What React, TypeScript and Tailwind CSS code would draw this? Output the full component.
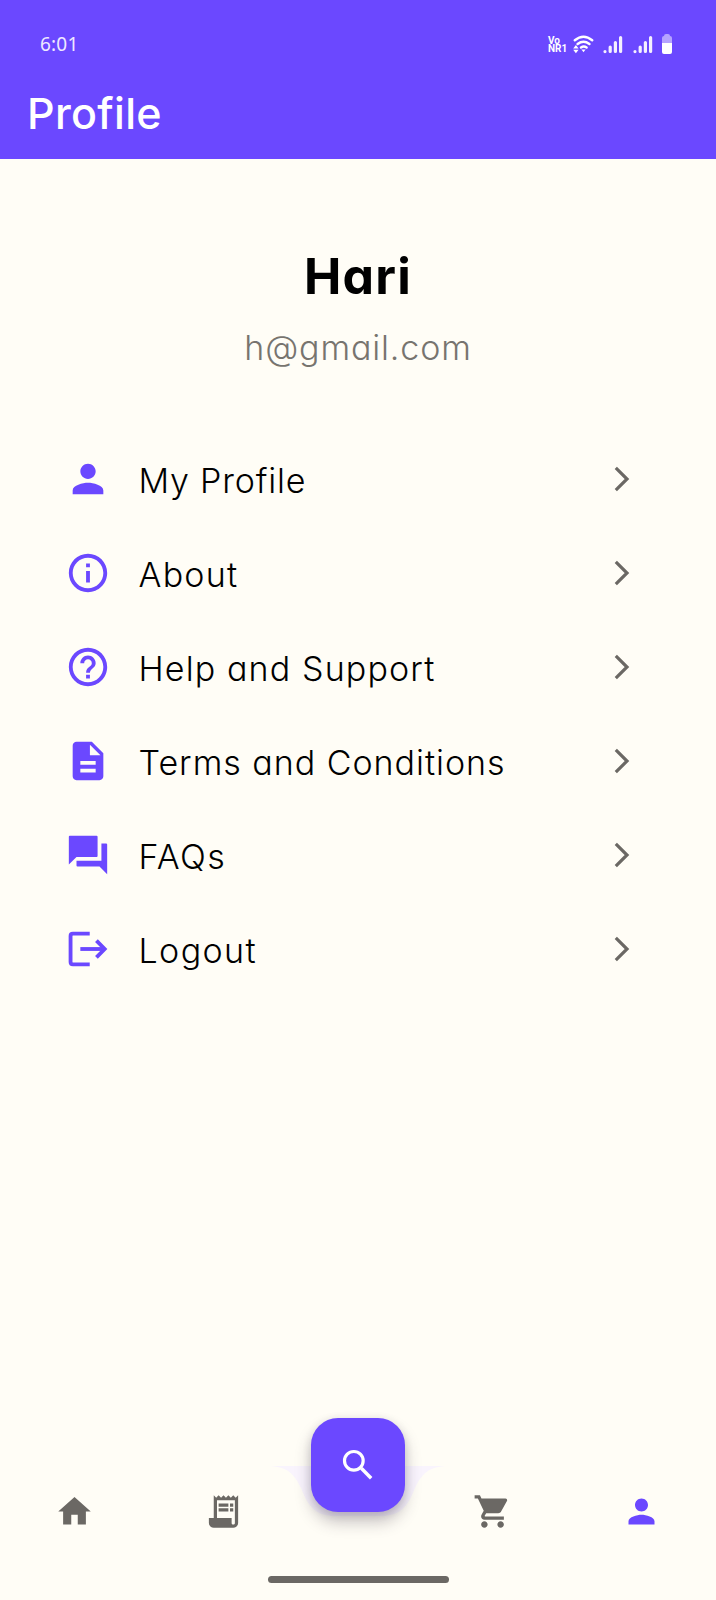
import type { ComponentType } from 'react'
import {
  MdPerson,
  MdInfoOutline,
  MdHelpOutline,
  MdDescription,
  MdHome,
  MdReceiptLong,
  MdShoppingCart,
} from 'react-icons/md'

type IconType = ComponentType<{ className?: string }>

interface MenuItem {
  label: string
  icon: IconType
  tracking: string
}

function LogoutIcon({ className }: { className?: string }) {
  return (
    <svg viewBox="0 0 24 24" fill="none" stroke="currentColor" strokeWidth="2" className={className}>
      <path d="M12 4H4.2Q3 4 3 5.2V18.8Q3 20 4.2 20H12" strokeLinecap="square" transform="translate(-0.1 0)" />
      <path d="M8 12H20.3" />
      <path d="M16.4 7.6L20.7 12L16.4 16.4" />
    </svg>
  )
}

function ForumIcon({ className }: { className?: string }) {
  return (
    <svg viewBox="0 0 24 24" fill="currentColor" className={className}>
      <path d="M21.5 6H19v9H6v2.5q0 .5.5.5H18l4 4V6.5q0-.5-.5-.5zM17 12.5v-10q0-.5-.5-.5h-14q-.5 0-.5.5V17l4-4h10.5q.5 0 .5-.5z" />
    </svg>
  )
}

function SearchIcon({ className }: { className?: string }) {
  return (
    <svg viewBox="0 0 24 24" fill="none" stroke="currentColor" strokeWidth="1.9" className={className}>
      <circle cx="9.5" cy="9.5" r="5.6" />
      <path d="M14 14L19.9 19.9" strokeWidth="2.1" />
    </svg>
  )
}

const menuItems: MenuItem[] = [
  { label: 'My Profile', icon: MdPerson, tracking: 'tracking-[0.8px]' },
  { label: 'About', icon: MdInfoOutline, tracking: 'tracking-[1.25px]' },
  { label: 'Help and Support', icon: MdHelpOutline, tracking: 'tracking-[1.13px]' },
  { label: 'Terms and Conditions', icon: MdDescription, tracking: 'tracking-[0.97px]' },
  { label: 'FAQs', icon: ForumIcon, tracking: 'tracking-[1.4px]' },
  { label: 'Logout', icon: LogoutIcon, tracking: 'tracking-[1.4px]' },
]

function SignalIcon() {
  return (
    <svg width="20" height="19" viewBox="0 0 20 19" fill="none" stroke="#f4f0ff" strokeWidth="3.2" strokeLinecap="round">
      <path d="M2 16.5V16.6M7.2 12V16.5M12.4 7.5V16.5M17.6 2.5V16.5" />
    </svg>
  )
}

function WifiIcon() {
  return (
    <svg width="21" height="19" viewBox="0 0 21 19" fill="none" stroke="white" strokeWidth="2.4" strokeLinecap="round">
      <path d="M1.8 5.2Q10.5 -1.8 19.2 5.2M4.6 9Q10.5 4.6 16.4 9M8 12.6Q10.8 10.6 13.6 12.6" />
      <path d="M8.4 14.6H12.6L10.5 17.2Z" fill="white" stroke="none" />
      <path d="M0.2 13.4L2.9 10L5.6 13.4ZM0.2 14.8L2.9 18.2L5.6 14.8Z" fill="white" stroke="none" />
    </svg>
  )
}

function StatusBar() {
  return (
    <div className="flex h-[88px] items-center justify-between pr-[44px] pl-10">
      <span className="font-['Noto_Sans',sans-serif] text-[19px] tracking-[0.2px] text-[#efe9ff]">6:01</span>
      <div className="flex items-center">
        <div className="mr-[3px] w-[22px] pt-px font-['Roboto',sans-serif] text-[10px] leading-[8px] font-bold text-white">
          <div>Vo</div>
          <div>NR1</div>
        </div>
        <WifiIcon />
        <div className="ml-[9px]">
          <SignalIcon />
        </div>
        <div className="ml-[10px]">
          <SignalIcon />
        </div>
        <div className="ml-[9px] flex flex-col items-center">
          <div className="h-[2px] w-[6px] rounded-t-[2px] bg-[#b5a3ff]" />
          <div className="h-[7px] w-[10px] rounded-t-[2px] bg-[#b5a3ff]" />
          <div className="h-[11px] w-[10px] rounded-b-[2px] bg-white" />
        </div>
      </div>
    </div>
  )
}

function MenuRow({ item }: { item: MenuItem }) {
  const Icon = item.icon
  return (
    <button className="flex h-[94px] w-full items-center text-left">
      <Icon className="size-[46px] shrink-0 text-[#6b48ff]" />
      <span className={`ml-[28px] flex-1 pt-[3px] text-[34px] leading-[40px] font-light whitespace-nowrap text-black ${item.tracking}`}>
        {item.label}
      </span>
      <svg width="16" height="26" viewBox="0 0 16 26" fill="none" stroke="#6b6864" strokeWidth="3.2">
        <path d="M1.8 1.8L13 13L1.8 24.2" />
      </svg>
    </button>
  )
}

function NavItem({ icon: Icon, active = false }: { icon: IconType; active?: boolean }) {
  return (
    <button className="flex w-[149px] justify-center">
      <Icon className={`size-[39px] ${active ? 'text-[#6b48ff]' : 'text-[#6b6864]'}`} />
    </button>
  )
}

function BottomBar() {
  return (
    <nav className="relative h-[134px]">
      <svg className="absolute top-0 left-[270px]" width="176" height="50" viewBox="0 0 176 50">
        <path
          d="M0 0C18 1 24 8 31 22C38 40 45 50 66 50H110C131 50 138 40 145 22C152 8 158 1 176 0Z"
          fill="#f9f4fd"
        />
      </svg>
      <div className="flex items-center justify-between pt-[26px]">
        <NavItem icon={MdHome} />
        <NavItem icon={MdReceiptLong} />
        <div className="w-[120px]" />
        <NavItem icon={MdShoppingCart} />
        <NavItem icon={MdPerson} active />
      </div>
      {/* floating search button overlaps the notch */}
      <button className="absolute -top-[48px] left-[311px] flex size-[94px] items-center justify-center rounded-[27px] bg-[#6b48ff] shadow-[0_10px_16px_rgba(50,40,60,0.28),0_2px_8px_rgba(50,40,70,0.14)]">
        <SearchIcon className="size-[40px] text-white" />
      </button>
      <div className="mx-auto mt-[45px] h-[7px] w-[181px] rounded-full bg-[#6b6864]" />
    </nav>
  )
}

export default function App() {
  return (
    <div className="flex h-[1600px] w-[716px] flex-col overflow-hidden bg-[#fffdf6] font-['Inter',sans-serif] [font-feature-settings:'cv11']">
      <header className="h-[159px] bg-[#6b48ff]">
        <StatusBar />
        <h1 className="pl-[27px] text-[43px] leading-[50px] font-medium tracking-[0.3px] text-white">Profile</h1>
      </header>
      <main className="flex-1">
        <div className="pt-[87px] text-center">
          <h2 className="text-[50px] leading-[60px] font-bold tracking-[1.2px] text-black">Hari</h2>
          <p className="mt-[22px] text-[34px] leading-[40px] font-light tracking-[0.85px] text-[#77746f]">h@gmail.com</p>
        </div>
        <div className="mt-[64px] pr-[86px] pl-[64.5px]">
          {menuItems.map((item) => (
            <MenuRow key={item.label} item={item} />
          ))}
        </div>
      </main>
      <BottomBar />
    </div>
  )
}
